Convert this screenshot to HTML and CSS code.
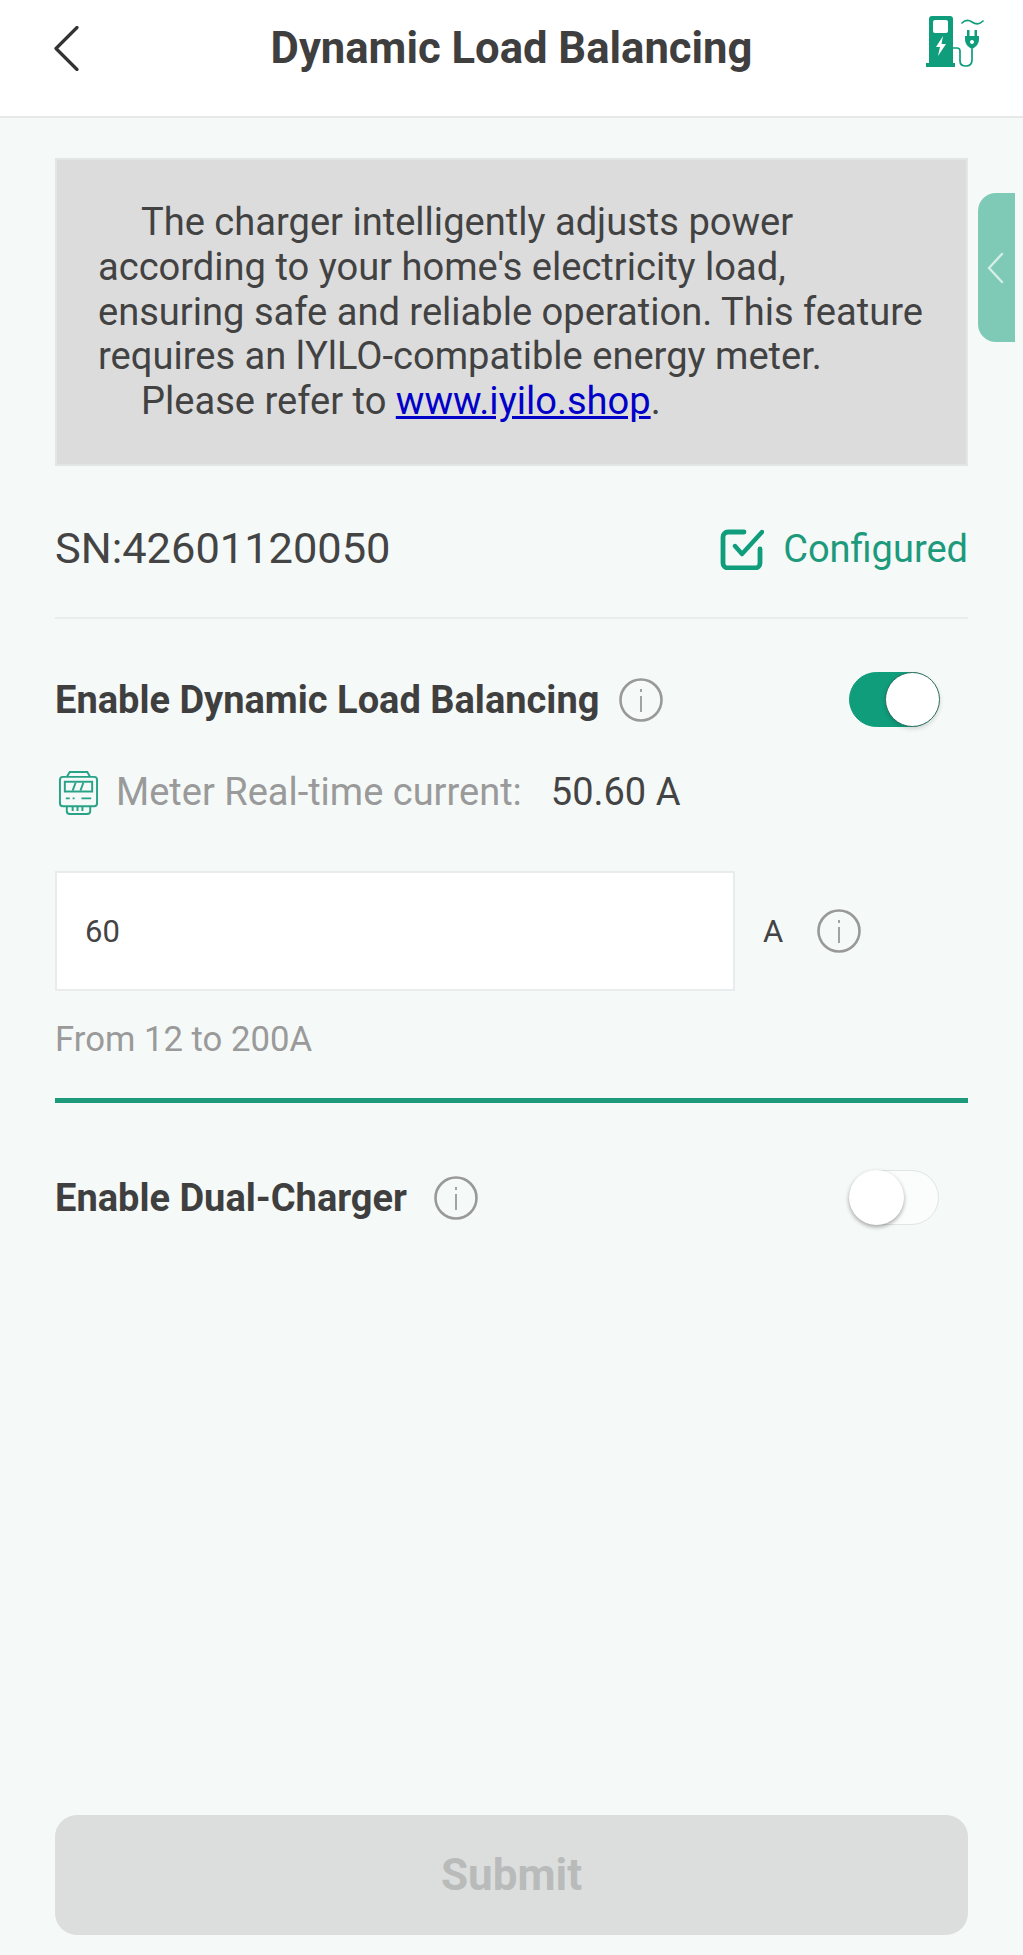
FILE: index.html
```html
<!DOCTYPE html>
<html lang="en">
<head>
<meta charset="utf-8">
<title>Dynamic Load Balancing</title>
<link rel="stylesheet" href="styles.css">
</head>
<body>
<div class="page">
  <header class="topbar">
    <svg class="back" viewBox="0 0 25 45" width="25" height="45"><path d="M23 1.500 L2 22.500 L23 43.500" fill="none" stroke="#333" stroke-width="3.200" stroke-linecap="round" stroke-linejoin="round"/></svg>
    <h1 class="title">Dynamic Load Balancing</h1>
    <svg class="station" viewBox="0 0 58 52" width="58" height="52">
      <path fill="#0f9d7c" fill-rule="evenodd" d="M3 3a3 3 0 0 1 3-3h18a3 3 0 0 1 3 3v44h2v4H0v-4h3zM7 6v9a2 2 0 0 0 2 2h11a2 2 0 0 0 2-2V6a2 2 0 0 0-2-2H9a2 2 0 0 0-2 2zM17 20l-7 11h4l-2 9 8-12h-4.500z"/>
      <path fill="none" stroke="#0f9d7c" stroke-width="1.700" stroke-linecap="round" d="M27 32h4q3 0 3 3v10q0 5 6 5t6-6V33"/>
      <path fill="#0f9d7c" fill-rule="evenodd" d="M41 14h2.500v6h5v-6H51v6h2v3c0 5-3 8-7 10-4-2-7-5-7-10v-3h2zM46 24a2 2 0 1 0 .01 0z"/>
      <path fill="none" stroke="#0f9d7c" stroke-width="1.700" stroke-linecap="round" d="M36 7c4-4 7-3 10-1s7 3 11-1"/>
    </svg>
  </header>

  <main class="content">
    <div class="side-tab"><svg viewBox="0 0 20 34" width="20" height="34"><path d="M17 3 L4 17 L17 31" fill="none" stroke="#d4efe7" stroke-width="2.400" stroke-linecap="round" stroke-linejoin="round"/></svg></div>

    <section class="notice">
      <p class="notice-par">The charger intelligently adjusts power according to your home's electricity load, ensuring safe and reliable operation. This feature requires an lYlLO-compatible energy meter.</p>
      <p class="notice-par">Please refer to <a href="#">www.iyilo.shop</a>.</p>
    </section>

    <div class="sn-row">
      <span class="sn">SN:42601120050</span>
      <span class="status">
        <svg viewBox="0 0 44 42" width="44" height="42"><path d="M24 4H8a5 5 0 0 0-5 5v26a5 5 0 0 0 5 5h27a5 5 0 0 0 5-5V21" fill="none" stroke="#0f9d7c" stroke-width="4.800" stroke-linecap="round"/><path d="M15 18l7 8L42 4" fill="none" stroke="#0f9d7c" stroke-width="4.400" stroke-linecap="round" stroke-linejoin="round"/></svg>
        Configured
      </span>
    </div>

    <div class="option first">
      <span class="option-label">Enable Dynamic Load Balancing</span>
      <svg class="info info-gap-s" viewBox="0 0 44 44" width="44" height="44"><circle cx="22" cy="22" r="20.500" fill="none" stroke="#999" stroke-width="2.600"/><path d="M22 18v16M22 11v3" stroke="#999" stroke-width="1.800" fill="none"/></svg>
      <span class="switch on"><span class="knob"></span></span>
    </div>

    <div class="meter">
      <svg viewBox="0 0 42 46" width="41" height="45" fill="none" stroke="#29a287" stroke-width="2"><path d="M9 7l3-5h18l3 5"/><rect x="2" y="7" width="38" height="30" rx="3"/><rect x="7" y="12" width="28" height="10"/><path d="M15 21l3-8M23 21l3-8M8 29h4M15 29h2M24 29h10M9 37v5q0 3 3 3h18q3 0 3-3v-5M15 37v5M20 37v5M25 37v5"/></svg>
      <span class="meter-label">Meter Real-time current:</span>
      <span class="meter-value">50.60 A</span>
    </div>

    <div class="limit">
      <div class="limit-input">60</div>
      <span class="unit">A</span>
      <svg class="info" viewBox="0 0 44 44" width="44" height="44"><circle cx="22" cy="22" r="20.500" fill="none" stroke="#999" stroke-width="2.600"/><path d="M22 18v16M22 11v3" stroke="#999" stroke-width="1.800" fill="none"/></svg>
    </div>
    <p class="hint">From 12 to 200A</p>
    <div class="rule"></div>

    <div class="option">
      <span class="option-label">Enable Dual-Charger</span>
      <svg class="info info-gap-l" viewBox="0 0 44 44" width="44" height="44"><circle cx="22" cy="22" r="20.500" fill="none" stroke="#999" stroke-width="2.600"/><path d="M22 18v16M22 11v3" stroke="#999" stroke-width="1.800" fill="none"/></svg>
      <span class="switch"><span class="knob"></span></span>
    </div>

    <button class="submit" type="button" disabled>Submit</button>
  </main>
</div>
</body>
</html>
```

FILE: styles.css
```css
* { box-sizing: border-box; }
html, body { margin: 0; padding: 0; }
body { font-family: Roboto, "Liberation Sans", sans-serif; color: #3f3f3f; background: #f5f9f8; }
.page { width: 1023px; height: 1955px; display: flex; flex-direction: column; overflow: hidden; }

.topbar { height: 118px; flex: none; background: #fff; border-bottom: 2px solid #e8e8e8; display: flex; align-items: flex-start; padding: 26px 39px 0 54px; position: relative; }
.back { flex: none; }
.title { margin: 0; position: absolute; left: 0; right: 0; top: 22px; text-align: center; font-size: 43.6px; line-height: 54px; font-weight: 700; color: #3f3f3f; }
.station { margin-left: auto; margin-top: -10px; flex: none; }

.content { flex: 1; position: relative; padding: 40px 55px 20px; display: flex; flex-direction: column; }
.side-tab { position: absolute; left: 978px; top: 75px; width: 37px; height: 149px; background: #7fcab6; border-radius: 18px 0 0 18px; display: flex; align-items: center; padding-left: 7px; }

.notice { height: 308px; background: #dcdcdc; border: 2px solid #e4e6e6; padding: 40px 35px 0 41px; font-size: 38.1px; line-height: 44.8px; color: #424242; }
.notice-par { margin: 0; text-indent: 43px; }
.notice a { color: #0000c8; text-decoration: underline; }

.sn-row { display: flex; justify-content: space-between; align-items: center; height: 153px; padding-top: 14px; border-bottom: 2px solid #e8ecec; font-size: 43.4px; }
.sn { color: #444; }
.status { display: flex; align-items: center; gap: 19px; color: #1d9a7c; font-size: 38px; }

.option { display: flex; align-items: center; height: 55px; }
.option.first { margin-top: 53px; }
.option-label { font-size: 38px; font-weight: 700; color: #3f3f3f; }
.info { flex: none; }
.info-gap-s { margin-left: 20px; }
.info-gap-l { margin-left: 27px; }
.switch { margin-left: auto; margin-right: 29px; width: 90px; height: 55px; border-radius: 28px; background: #fbfcfc; border: 1px solid #e2e5e5; position: relative; display: block; }
.knob { position: absolute; left: -1px; top: -1px; width: 55px; height: 55px; border-radius: 50%; background: #fff; box-shadow: 0 2px 4px rgba(0,0,0,.35); }
.switch.on { background: #0f9d7c; border-color: #0f9d7c; }
.switch.on .knob { left: 35px; border: 1px solid #2f6f5f; box-shadow: 0 2px 4px rgba(0,0,0,.15); }

.meter { display: flex; align-items: center; margin: 41px 0 0 3px; height: 48px; font-size: 38px; }
.meter-label { color: #9a9a9a; margin-left: 17px; }
.meter-value { color: #444; margin-left: 29px; }

.limit { display: flex; align-items: center; margin-top: 55px; }
.limit-input { width: 680px; height: 120px; background: #fff; border: 2px solid #e8ecec; display: flex; align-items: center; padding-left: 28px; font-size: 31px; color: #444; }
.unit { margin-left: 28px; font-size: 31px; color: #444; }
.limit .info { margin-left: 34px; }
.hint { margin: 28px 0 0; font-size: 34.7px; line-height: 40px; color: #9a9a9a; }
.rule { height: 5px; background: #1d9a7c; margin: 39px 0 67px; }

.submit { margin-top: auto; height: 120px; width: 100%; border: 0; border-radius: 22px; background: #dcdede; color: #b9bbbb; font-family: inherit; font-size: 44px; font-weight: 700; }
```
